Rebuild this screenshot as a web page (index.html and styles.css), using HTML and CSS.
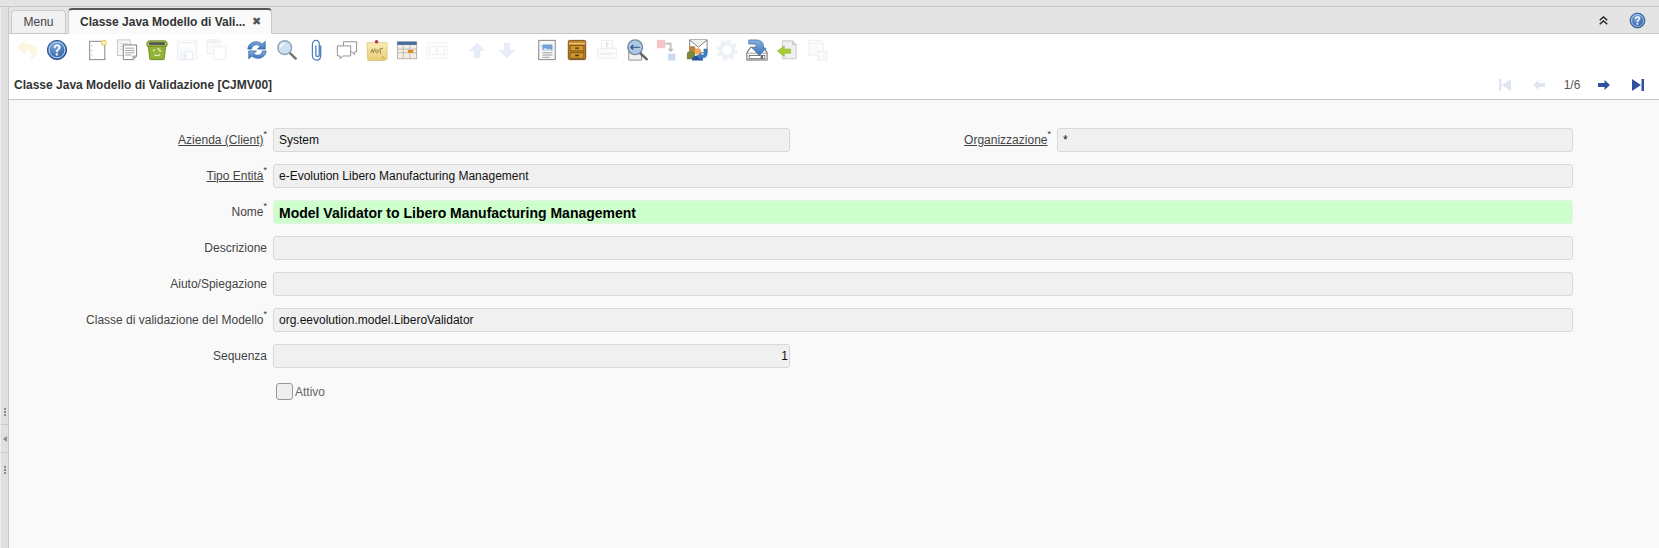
FILE: index.html
```html
<!DOCTYPE html>
<html lang="it">
<head>
<meta charset="utf-8">
<title>Classe Java Modello di Validazione</title>
<link rel="stylesheet" href="styles.css">
</head>
<body>
<svg class="sprite" width="0" height="0" aria-hidden="true">
  <defs>
    <radialGradient id="gHelp" cx=".4" cy=".3" r=".8"><stop offset="0" stop-color="#7ba6dc"/><stop offset="1" stop-color="#22559e"/></radialGradient>
    <linearGradient id="gBlue" x1="0" y1="0" x2="0" y2="1"><stop offset="0" stop-color="#86b1de"/><stop offset="1" stop-color="#3a78ba"/></linearGradient>
    <linearGradient id="gPost" x1="0" y1="0" x2="0" y2="1"><stop offset="0" stop-color="#fbedb4"/><stop offset="1" stop-color="#e8cc78"/></linearGradient>
    <symbol id="i-undo" viewBox="0 0 24 24"><path d="M10 1 1 9l9 8v-5c4 0 7 2 7 5 0 2-1 4-2 6 5-2 8-5 8-10 0-6-5-8-13-8z" fill="#f0d36a"/></symbol>
    <symbol id="i-help" viewBox="0 0 24 24"><circle cx="12" cy="12" r="10.5" fill="url(#gHelp)" stroke="#1b4686"/><circle cx="12" cy="12" r="8.600" fill="none" stroke="#cfe0f3" stroke-width="1"/><path d="M8.600 9.400c.2-2.200 1.700-3.300 3.600-3.300 2.100 0 3.500 1.200 3.500 3 0 2.700-3 2.500-3 5h-1.600c0-3.200 2.700-3.100 2.700-4.900 0-.9-.7-1.500-1.700-1.500s-1.700.7-1.800 1.900z" fill="#fff" stroke="#fff" stroke-width=".5"/><rect x="10.700" y="15.600" width="2.200" height="2.400" fill="#fff"/></symbol>
    <symbol id="i-new" viewBox="0 0 24 24"><rect x="4" y="2.500" width="16.500" height="20" fill="#fff" stroke="#888" stroke-width="1.100"/><path d="M6.500 7v1M6.500 12v1M6.500 17v1" stroke="#999"/><circle cx="19.500" cy="4" r="2.500" fill="#fff8d8" stroke="#e6cc55" stroke-width="1.200"/></symbol>
    <symbol id="i-copy" viewBox="0 0 24 24"><rect x="1.500" y="1" width="14" height="17" fill="#f7f7f7" stroke="#c4c4c4"/><path d="M4 5h9M4 8h9M4 11h9" stroke="#d4d4d4"/><path d="M8 6.500h14.500v12l-4 4H8z" fill="#fff" stroke="#777"/><path d="M10 10h10M10 12.500h10M10 15h10M10 17.500h7" stroke="#999"/><path d="M18.500 22.500v-4h4z" fill="#ccc" stroke="#777" stroke-width=".6"/></symbol>
    <symbol id="i-delete" viewBox="0 0 24 24"><path d="M2.500 7 4 21.500c0 .6.500 1 1 1h14c.5 0 1-.4 1-1L21.500 7z" fill="#93b238" stroke="#6b8722"/><path d="M1 5c0-2 1-3 3-3h16c2 0 3 1 3 3v2c0 .6-.4 1-1 1H2c-.6 0-1-.4-1-1z" fill="#a3bf52" stroke="#6b8722"/><path d="M3.500 3.500h17v3h-17z" fill="#555"/><path d="M12 10.500a4.500 4.500 0 0 1 4 2.500l-1.500.5M8 13.500a4.500 4.500 0 0 1 1.500-2M9 17a4.500 4.500 0 0 0 6.500-.5" fill="none" stroke="#e7f0cf" stroke-width="1.300"/></symbol>
    <symbol id="i-save" viewBox="0 0 24 24"><rect x="1.500" y="1.500" width="21" height="21" rx="1.500" fill="#dfe7f3" stroke="#8ea6cc"/><rect x="5" y="1.500" width="14" height="8" fill="#fff"/><path d="M5 4h14" stroke="#d66"/><rect x="6" y="14" width="12" height="8.500" fill="#fff" stroke="#8ea6cc"/><rect x="8" y="15.500" width="3" height="6" fill="#8ea6cc"/></symbol>
    <symbol id="i-savenew" viewBox="0 0 24 24"><rect x="1" y="1" width="15" height="15" fill="#dfe7f3" stroke="#8ea6cc"/><path d="M3 3.500h11" stroke="#d66"/><rect x="8.500" y="8.500" width="13" height="14" fill="#fff" stroke="#aaa"/><circle cx="21" cy="9" r="2.500" fill="#fff4c0" stroke="#e6cc55"/></symbol>
    <symbol id="i-refresh" viewBox="0 0 24 24"><path d="M2 11C2.500 5.500 7 3 11 3c3 0 5 1 6.500 2.500L21 2.500V11h-8.500l3-3c-1-1-2.500-1.700-4.200-1.700C8.500 6.300 6.500 8 6 11z" fill="url(#gBlue)" stroke="#2f67a6" stroke-width=".8"/><path d="M22 13c-.5 5.500-5 8-9 8-3 0-5-1-6.500-2.500L3 21.500V13h8.500l-3 3c1 1 2.500 1.700 4.200 1.700 2.800 0 4.800-1.700 5.300-4.700z" fill="url(#gBlue)" stroke="#2f67a6" stroke-width=".8"/></symbol>
    <symbol id="i-find" viewBox="0 0 24 24"><path d="m14.500 14.500 7 7" stroke="#777" stroke-width="2.800" stroke-linecap="round"/><circle cx="9.500" cy="9.500" r="7.500" fill="#cfe2f5" stroke="#93a7bd" stroke-width="1.600"/><path d="M5 9a4.500 4.500 0 0 1 4-4" stroke="#fff" fill="none" stroke-width="1.500"/></symbol>
    <symbol id="i-attach" viewBox="0 0 24 24"><path d="M16 7v11c0 3-2 5-4.500 5S7 21 7 18V6c0-2.500 1.500-4.500 3.800-4.500S14.500 3.500 14.500 6v11c0 1.200-.6 2.200-1.800 2.200s-1.900-1-1.900-2.200V7" fill="none" stroke="#4c7fbe" stroke-width="1.400"/></symbol>
    <symbol id="i-chat" viewBox="0 0 24 24"><path d="M8 3h14.500v11H20v3l-3-3H8z" fill="#fff" stroke="#888"/><path d="M1.500 7.500H16v11H7.500l-3 3v-3h-3z" fill="#fff" stroke="#888"/></symbol>
    <symbol id="i-note" viewBox="0 0 24 24"><path d="M1 4h22v18l-3 1.500H2z" fill="url(#gPost)" stroke="#d7b95e" stroke-width=".7"/><circle cx="11.500" cy="3" r="2" fill="#b23a50"/><path d="m5 15 2-4 1 4 2-4.500m2 1.500a1.500 1.500 0 1 0 .1 0m3-1 1 5m-1.500-5 4-1" fill="none" stroke="#8a7840" stroke-width="1"/><path d="m17 22 2-3 1 3" fill="none" stroke="#c2a850"/></symbol>
    <symbol id="i-grid" viewBox="0 0 24 24"><rect x="1.500" y="3" width="21" height="18.500" fill="#f4efe4" stroke="#aaa"/><rect x="1.500" y="3" width="21" height="3.500" fill="#46709f"/><path d="M1.500 11h21M1.500 15h21M8 7v14M15 7v14" stroke="#c2b8a4"/><rect x="13" y="12" width="6" height="3" fill="#e2851f"/></symbol>
    <symbol id="i-layout" viewBox="0 0 24 24"><rect x="1" y="4" width="22" height="17" fill="#fafafa" stroke="#bbb"/><rect x="4" y="8" width="7" height="9" fill="#fff" stroke="#aaa"/><rect x="13" y="8" width="7" height="9" fill="#fff" stroke="#aaa"/></symbol>
    <symbol id="i-up" viewBox="0 0 24 24"><path d="M12 4 3 13h5.500v8h7v-8H21z" fill="#8aa6e0"/></symbol>
    <symbol id="i-down" viewBox="0 0 24 24"><path d="M12 21 3 12h5.500V4h7v8H21z" fill="#8aa6e0"/></symbol>
    <symbol id="i-report" viewBox="0 0 24 24"><rect x="3" y="1.500" width="18" height="21" fill="#f7f7f7" stroke="#888" stroke-width="1.100"/><rect x="7" y="6" width="11" height="6.500" fill="#6fa0d3"/><path d="m7 12.500 3-3 3 2 2-1 3 2z" fill="#d8e6f3"/><path d="M5 8h.8M7 15h11M7 17.500h11M7 20h8" stroke="#999"/></symbol>
    <symbol id="i-archive" viewBox="0 0 24 24"><rect x="2.500" y="1.500" width="19" height="21" rx="1.500" fill="#c48a24" stroke="#6b4c18"/><path d="M3 5h18" stroke="#eec47a" stroke-width="1.500"/><rect x="4.500" y="7" width="15" height="6" fill="#d3962c" stroke="#7a5619"/><rect x="4.500" y="15" width="15" height="6" fill="#d3962c" stroke="#7a5619"/><path d="M10 10h4M10 18h4" stroke="#4c340c" stroke-width="1.400"/></symbol>
    <symbol id="i-print" viewBox="0 0 24 24"><path d="M6 1.500h12v9H6z" fill="#fff" stroke="#999"/><path d="M12 3 9 6h2v3h2V6h2z" fill="#888"/><rect x="1.500" y="10" width="21" height="11" rx="2.500" fill="#eee" stroke="#999"/><path d="M4 16h16" stroke="#999" stroke-width="1.500"/></symbol>
    <symbol id="i-zoomacross" viewBox="0 0 24 24"><path d="M3 10h14v13H3z" fill="#f2f2f2" stroke="#888"/><path d="m15 15 7.500 7" stroke="#666" stroke-width="2.800" stroke-linecap="round"/><circle cx="10" cy="9" r="8" fill="#acc8e4" stroke="#75899f" stroke-width="1.500"/><path d="M5 9h10M5 9l3-2.500M5 9l3 2.500" fill="none" stroke="#2b4d85" stroke-width="1.300"/></symbol>
    <symbol id="i-related" viewBox="0 0 24 24"><rect x="1" y="1" width="9" height="9" fill="#e57c7c"/><path d="M10 5h6v6" fill="none" stroke="#666" stroke-width="1.800"/><path d="m12.500 10.500 3.500 4 3.500-4z" fill="#666"/><rect x="13" y="16" width="8" height="7.500" fill="#7da5dd"/></symbol>
    <symbol id="i-workflow" viewBox="0 0 24 24"><path d="M4 1h19v14H4z" fill="#fff" stroke="#777"/><path d="m4 1 9.500 8L23 1" fill="#f0f0f0" stroke="#777"/><circle cx="7" cy="11" r="3.500" fill="#c08238"/><path d="M1 22v-6c0-2 2-3 5-3s4 1 4 3v6z" fill="#79883b"/><circle cx="13" cy="13.500" r="3.500" fill="#f2a95c"/><path d="M6.500 23.500c0-3 2.500-5.500 6.500-5.500s5.500 2.500 5.500 5.500z" fill="#2a4f9c"/><path d="M23 11v6c0 2-2 3.500-4 3.500h-2.500v2.500l-4.500-4 4.500-4v2.500h1.500c1 0 1.500-.5 1.500-1.500V11z" fill="#3a82c8" stroke="#2a5f9f" stroke-width=".5"/></symbol>
    <symbol id="i-gear" viewBox="0 0 24 24"><circle cx="12" cy="12" r="9.500" fill="none" stroke="#a9b9d6" stroke-width="4" stroke-dasharray="4.200 3.260"/><circle cx="12" cy="12" r="7" fill="none" stroke="#a9b9d6" stroke-width="4"/></symbol>
    <symbol id="i-export" viewBox="0 0 24 24"><path d="M5 9 1 15v8h22v-8l-4-6z" fill="#fff" stroke="#666" stroke-width="1.100"/><path d="M1.500 15.500h21" stroke="#999"/><rect x="3.500" y="18" width="17" height="3.500" fill="#fff" stroke="#666" stroke-width=".9"/><rect x="16" y="18" width="2.500" height="3.500" fill="#666"/><path d="M3 1h8c5 0 8 2.500 8 6.500V10h3l-7.500 8L7 10h4V8c0-1.500-1-2.500-3-2.500H3z" fill="url(#gBlue)" stroke="#2f6ba8" stroke-width=".7"/></symbol>
    <symbol id="i-import" viewBox="0 0 24 24"><path d="M7 2h11l4 4v15.500H7z" fill="#f0f0f0" stroke="#c4c4c4"/><path d="M18 2v4h4" fill="#ddd" stroke="#c4c4c4"/><path d="M1.500 13 9 7.500V11h7v4.500H9V19z" fill="#a9cc36" stroke="#8aab26" stroke-width=".6"/></symbol>
    <symbol id="i-last" viewBox="0 0 24 24"><path d="M3 1.500h13l3 3v13H3z" fill="#eee" stroke="#aaa"/><path d="M3 5h13" stroke="#bbb"/><rect x="13" y="13.500" width="10" height="9.500" fill="#cfd9ea" stroke="#aab7d0"/><path d="M19 16h-3v4.500h3" fill="none" stroke="#fff" stroke-width="1.400"/></symbol>
    <symbol id="n-first" viewBox="0 0 12 12"><path d="M0 0h2.500v12H0zM12 0v12L3 6z" fill="#2f52a0"/></symbol>
    <symbol id="n-prev" viewBox="0 0 12 12"><path d="M0 6l5.500-5v3H12v4H5.500v3z" fill="#2f52a0"/></symbol>
    <symbol id="n-next" viewBox="0 0 12 12"><path d="M12 6 6.500 1v3H0v4h6.500v3z" fill="#2f52a0"/></symbol>
    <symbol id="n-last" viewBox="0 0 12 12"><path d="M12 0H9.500v12H12zM0 0v12l9-6z" fill="#2f52a0"/></symbol>
    <symbol id="i-chev" viewBox="0 0 9 9"><path d="M.7 4.200 4.500 1l3.800 3.200M.7 8.200 4.500 5l3.800 3.200" fill="none" stroke="#222" stroke-width="1.400"/></symbol>
  </defs>
</svg>

<div class="app">
  <div class="top-band"></div>
  <div class="shell">
    <aside class="strip">
      <div class="grip"><i></i><i></i><i></i></div>
      <div class="arrow-cell"><span class="arrow"></span></div>
      <div class="grip"><i></i><i></i><i></i></div>
    </aside>
    <main class="main">
      <nav class="tabbar">
        <div class="tab">Menu</div>
        <div class="tab active"><span class="tab-label">Classe Java Modello di Vali...</span><span class="close">✖</span></div>
        <div class="tab-tools">
          <svg class="chev"><use href="#i-chev"/></svg>
          <svg class="top-help"><use href="#i-help"/></svg>
        </div>
      </nav>
      <div class="toolbar">
        <button class="tb off"><svg><use href="#i-undo"/></svg></button>
        <button class="tb"><svg><use href="#i-help"/></svg></button>
        <span class="sep"></span>
        <button class="tb"><svg><use href="#i-new"/></svg></button>
        <button class="tb"><svg><use href="#i-copy"/></svg></button>
        <button class="tb"><svg><use href="#i-delete"/></svg></button>
        <button class="tb off"><svg><use href="#i-save"/></svg></button>
        <button class="tb off"><svg><use href="#i-savenew"/></svg></button>
        <span class="sep"></span>
        <button class="tb"><svg><use href="#i-refresh"/></svg></button>
        <button class="tb"><svg><use href="#i-find"/></svg></button>
        <button class="tb"><svg><use href="#i-attach"/></svg></button>
        <button class="tb"><svg><use href="#i-chat"/></svg></button>
        <button class="tb"><svg><use href="#i-note"/></svg></button>
        <button class="tb"><svg><use href="#i-grid"/></svg></button>
        <button class="tb off"><svg><use href="#i-layout"/></svg></button>
        <span class="sep"></span>
        <button class="tb off"><svg><use href="#i-up"/></svg></button>
        <button class="tb off"><svg><use href="#i-down"/></svg></button>
        <span class="sep"></span>
        <button class="tb"><svg><use href="#i-report"/></svg></button>
        <button class="tb"><svg><use href="#i-archive"/></svg></button>
        <button class="tb off"><svg><use href="#i-print"/></svg></button>
        <button class="tb"><svg><use href="#i-zoomacross"/></svg></button>
        <button class="tb off strong"><svg><use href="#i-related"/></svg></button>
        <button class="tb"><svg><use href="#i-workflow"/></svg></button>
        <button class="tb off"><svg><use href="#i-gear"/></svg></button>
        <button class="tb"><svg><use href="#i-export"/></svg></button>
        <button class="tb"><svg><use href="#i-import"/></svg></button>
        <button class="tb off"><svg><use href="#i-last"/></svg></button>
      </div>
      <header class="titlebar">
        <h1 class="title">Classe Java Modello di Validazione [CJMV00]</h1>
        <div class="pager">
          <svg class="pg off gap-wide"><use href="#n-first"/></svg>
          <svg class="pg off"><use href="#n-prev"/></svg>
          <span class="count">1/6</span>
          <svg class="pg gap-wide"><use href="#n-next"/></svg>
          <svg class="pg"><use href="#n-last"/></svg>
        </div>
      </header>
      <form class="form">
        <label class="lbl"><u>Azienda (Client)</u><sup>*</sup></label>
        <div class="field">System</div>
        <label class="lbl"><u>Organizzazione</u><sup>*</sup></label>
        <div class="field">*</div>

        <label class="lbl"><u>Tipo Entità</u><sup>*</sup></label>
        <div class="field wide">e-Evolution Libero Manufacturing Management</div>

        <label class="lbl">Nome<sup>*</sup></label>
        <div class="field wide name">Model Validator to Libero Manufacturing Management</div>

        <label class="lbl plain">Descrizione</label>
        <div class="field wide"></div>

        <label class="lbl plain">Aiuto/Spiegazione</label>
        <div class="field wide"></div>

        <label class="lbl">Classe di validazione del Modello<sup>*</sup></label>
        <div class="field wide">org.eevolution.model.LiberoValidator</div>

        <label class="lbl plain">Sequenza</label>
        <div class="field num">1</div>

        <div class="check"><span class="box"></span><span class="check-label">Attivo</span></div>
      </form>
    </main>
  </div>
</div>
</body>
</html>
```
FILE: styles.css
```css
* { box-sizing: border-box; }
html, body { margin: 0; height: 100%; overflow: hidden; }
body { font-family: "Liberation Sans", Arial, sans-serif; font-size: 12px; color: #333; background: #f9f9f9; }
.sprite { display: block; height: 0; width: 0; }
.app { display: flex; flex-direction: column; height: 548px; }
.top-band { height: 7px; flex: none; background: #e4e4e4; border-bottom: 1px solid #c8c8c8; }
.shell { display: flex; flex: 1; min-height: 0; }

.strip { width: 9px; flex: none; background: #e0e0e0; border-right: 1px solid #c8c8c8; border-left: 1px solid #eee; display: flex; flex-direction: column; align-items: stretch; padding-top: 388px; }
.grip { height: 29px; padding-top: 4px; display: flex; flex-direction: column; align-items: center; justify-content: center; gap: 1px; }
.grip i { width: 2px; height: 2px; background: #8a8a8a; display: block; }
.arrow-cell { height: 29px; border-top: 1px solid #c8c8c8; border-bottom: 1px solid #c8c8c8; display: flex; align-items: center; justify-content: center; }
.arrow { width: 0; height: 0; border-style: solid; border-width: 3px 4px 3px 0; border-color: transparent #8a8a8a transparent transparent; }

.main { flex: 1; min-width: 0; display: flex; flex-direction: column; }

.tabbar { height: 27px; flex: none; background: #e4e4e4; border-bottom: 1px solid #c8c8c8; display: flex; align-items: flex-end; padding-left: 2px; }
.tab { height: 24px; width: 55px; margin-bottom: -1px; margin-right: 2px; background: #f1f1f1; border: 1px solid #c8c8c8; border-radius: 4px 4px 0 0; display: flex; align-items: center; justify-content: center; color: #444; }
.tab.active { width: 204px; height: 26px; background: #fafafa; border-top: 2px solid #555; border-bottom-color: #fafafa; justify-content: flex-start; padding-left: 11px; font-weight: bold; color: #333; }
.tab-label { width: 172px; flex: none; white-space: nowrap; }
.close { font-size: 11px; color: #555; font-family: "DejaVu Sans", sans-serif; }
.tab-tools { margin-left: auto; align-self: center; display: flex; align-items: center; gap: 21px; padding-right: 13px; }
.chev { width: 9px; height: 9px; display: block; }
.top-help { width: 17px; height: 17px; display: block; }

.toolbar { height: 32px; flex: none; background: #fff; display: flex; align-items: center; padding-left: 3px; }
.tb { width: 30px; height: 32px; padding: 0; border: 0; background: none; display: flex; align-items: center; justify-content: center; }
.tb svg { width: 22px; height: 22px; display: block; }
.tb.off svg { opacity: .2; }
.tb.off.strong svg { opacity: .42; }
.sep { width: 10px; flex: none; }

.titlebar { height: 34px; flex: none; background: #fff; border-bottom: 1px solid #c8c8c8; display: flex; align-items: center; justify-content: space-between; padding: 4px 15px 0 5px; }
.title { margin: 0; font-size: 12px; font-weight: bold; color: #333; }
.pager { display: flex; align-items: center; }
.pg { width: 12px; height: 12px; display: block; }
.pg.off { opacity: .14; }
.gap-wide { margin-right: 22px; }
.count { width: 30px; margin: 0 11px 0 12px; text-align: center; color: #555; font-size: 12px; white-space: nowrap; }

.form { flex: 1; background: #f9f9f9; padding-top: 28px; display: grid; grid-template-columns: 258px 517px 255px 516px; grid-auto-rows: 24px; column-gap: 6px; row-gap: 12px; align-content: start; }
.lbl { grid-column: 1; justify-self: end; align-self: center; color: #444; white-space: nowrap; line-height: 14px; }
.lbl:nth-of-type(2) { grid-column: 3; }
.lbl u { text-underline-offset: 1px; }
.lbl sup { font-size: 9px; line-height: 0; vertical-align: 7px; color: #333; }
.field { background: #f0f0f0; border: 1px solid #d8d8d8; border-radius: 3px; padding: 0 5px; display: flex; align-items: center; color: #111; white-space: nowrap; }
.field.wide { grid-column: 2 / 5; }
.field.name { background: #ccffcc; border-color: #e4f2e4; font-size: 14px; font-weight: bold; color: #000; padding-top: 1px; }
.field.num { grid-column: 2; justify-content: flex-end; padding-right: 1px; }
.check { grid-column: 2; display: flex; align-items: center; padding-left: 3px; margin-top: 3px; height: 17px; }
.box { width: 17px; height: 17px; border: 1px solid #999; border-radius: 3px; background: #efefef; margin-right: 2px; }
.check-label { color: #666; }
```
